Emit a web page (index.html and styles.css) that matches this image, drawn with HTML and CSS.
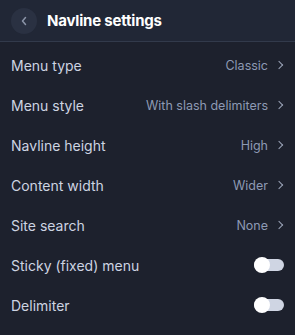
FILE: index.html
```html
<!DOCTYPE html>
<html>
<head>
<meta charset="utf-8" />
<title>Navline settings</title>
<link rel="stylesheet" href="styles.css">
</head>
<body>
<div class="panel">
	<div class="head">
		<a class="back">
			<svg width="8" height="10" viewBox="0 0 8 10"><path d="M5.5 1.5 L2.5 5 L5.5 8.5" fill="none" stroke="#8b94a8" stroke-width="1.5" stroke-linecap="round" stroke-linejoin="round"/></svg>
		</a>
		<span class="title">Navline settings</span>
	</div>
	<ul class="list">
		<li class="row"><span class="label">Menu type</span><span class="value">Classic<i class="chev"></i></span></li>
		<li class="row"><span class="label">Menu style</span><span class="value">With slash delimiters<i class="chev"></i></span></li>
		<li class="row"><span class="label">Navline height</span><span class="value">High<i class="chev"></i></span></li>
		<li class="row"><span class="label">Content width</span><span class="value">Wider<i class="chev"></i></span></li>
		<li class="row"><span class="label">Site search</span><span class="value">None<i class="chev"></i></span></li>
		<li class="row"><span class="label">Sticky (fixed) menu</span><span class="toggle"><b></b></span></li>
		<li class="row"><span class="label">Delimiter</span><span class="toggle"><b></b></span></li>
	</ul>
</div>
</body>
</html>
```
FILE: styles.css
```css
*{ padding:0; margin:0; border:0; list-style-type:none; box-sizing:border-box;}
body{ background:#1d212d; font-family:Inter, "Noto Sans", sans-serif; width:295px; height:335px; overflow:hidden;}
.panel{ width:295px;}
.head{ height:42px; background:#212736; border-bottom:1px solid #323a4b; display:flex; align-items:center; padding-left:11px;}
.head .back{ width:26px; height:26px; border-radius:50%; background:#2a3142; display:flex; align-items:center; justify-content:center; margin-right:10px;}
.head .title{ color:#ffffff; font-size:15px; font-weight:700; letter-spacing:-0.2px;}
.list{ padding-top:3px;}
.row{ height:40px; display:flex; align-items:center; justify-content:space-between; padding:0 11px 0 11px;}
.row .label{ color:#cdd4e2; font-size:14px;}
.row .value{ color:#8d9ab4; font-size:12.5px; display:flex; align-items:center;}
.row .chev{ width:6px; height:6px; border-right:1.5px solid #9aa3b8; border-top:1.5px solid #9aa3b8; transform:rotate(45deg); margin-left:8px; margin-right:2px;}
.toggle{ width:30px; height:12px; border-radius:6px; background:#cfd5e3; position:relative; margin-right:0;}
.toggle b{ position:absolute; left:0; top:-2px; width:16px; height:16px; border-radius:50%; background:#ffffff;}
```
